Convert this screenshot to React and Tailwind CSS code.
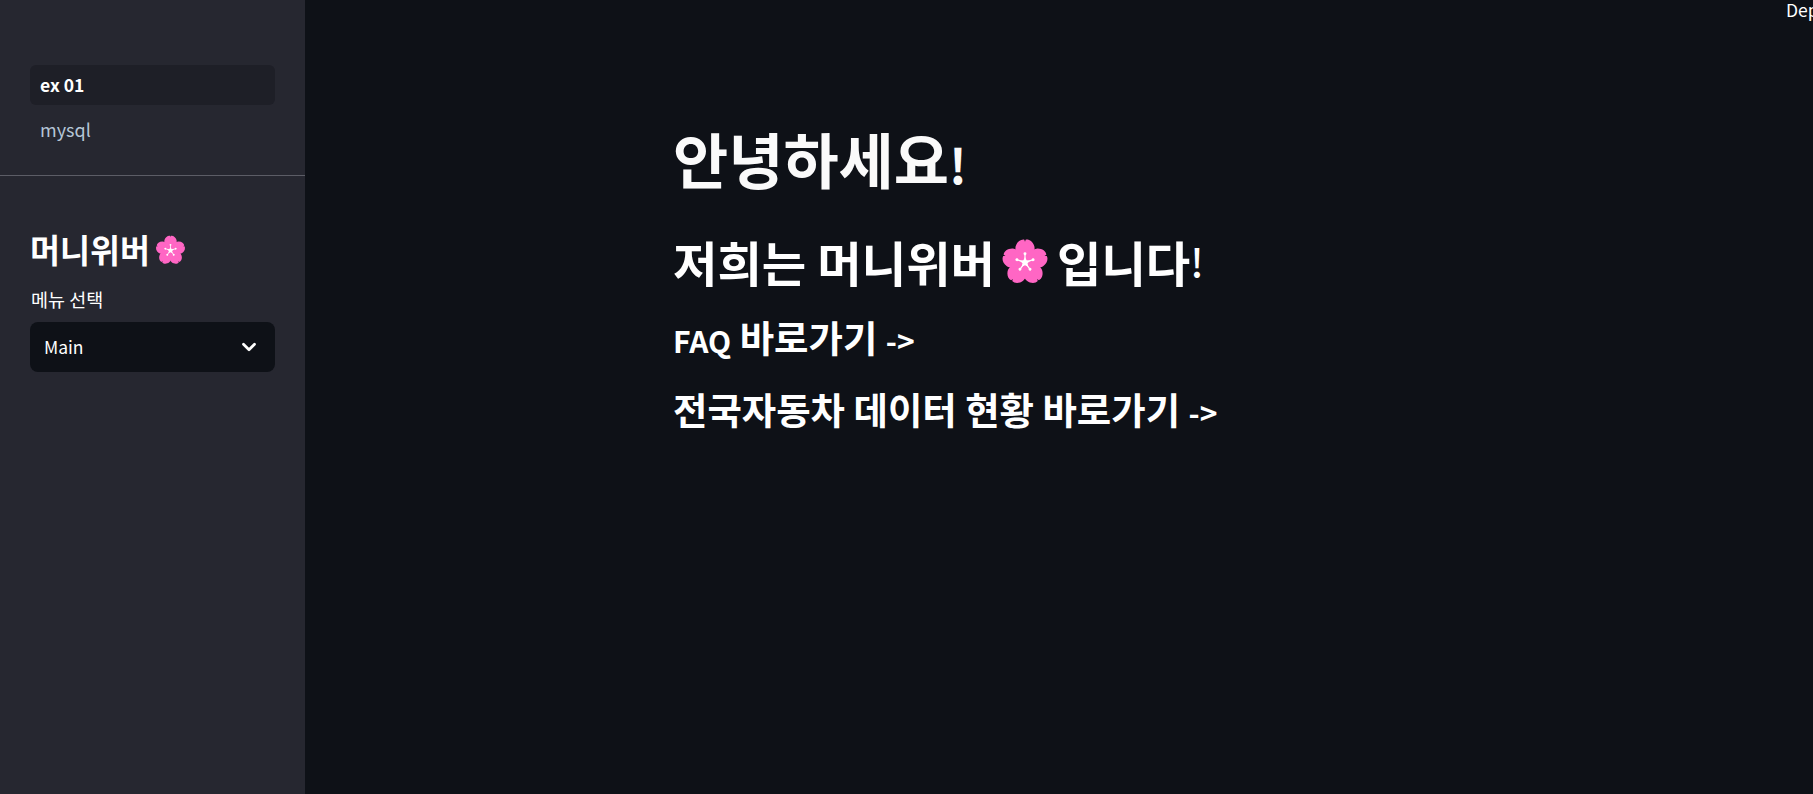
import React from "react";
import { ChevronDown } from "lucide-react";

const fontStack = "font-['Noto_Sans_CJK_KR','Noto_Sans',sans-serif]";

// 벚꽃 이모지 (no emoji font to rely on)
function Blossom({ className }) {
  const petals = [0, 72, 144, 216, 288];
  return (
    <svg viewBox="0 0 36 36" className={className}>
      {petals.map((deg) => (
        <path
          key={deg}
          transform={`rotate(${deg} 18 19)`}
          d="M18 20 C13 16 10 11 11 7 C12 3.5 15 1.5 17.5 2 L18 3.6 L18.5 2 C21 1.5 24 3.5 25 7 C26 11 23 16 18 20 Z"
          fill="#ff66c4"
        />
      ))}
      {petals.map((deg) => (
        <g key={deg} transform={`rotate(${deg} 18 19)`}>
          <path d="M18 19 L18 13" stroke="#ffffff" strokeWidth="0.9" />
          <circle cx="18" cy="12.6" r="1.1" fill="#ffffff" />
        </g>
      ))}
      <path
        d="M18 15 L19.2 17.4 L21.9 17.8 L19.9 19.7 L20.4 22.4 L18 21.1 L15.6 22.4 L16.1 19.7 L14.1 17.8 L16.8 17.4 Z"
        fill="#ffffff"
      />
    </svg>
  );
}

function Sidebar() {
  return (
    <aside className="w-[305px] shrink-0 bg-[#262730] flex flex-col">
      <nav className="pt-[65px] px-[30px] pb-[26px] border-b border-[#5c5d66]">
        <div className="h-[40px] rounded-md bg-[#1e1f27] px-[10px] flex items-center text-[17.5px] font-semibold text-white">
          ex 01
        </div>
        <div className="h-[40px] mt-[4px] px-[10px] flex items-center text-[18px] text-[#b5c5d6]">
          mysql
        </div>
      </nav>

      <div className="px-[30px] pt-[53px]">
        <h2 className="flex items-center h-[40px] text-[32.6px] leading-[40px] font-bold text-white">
          머니위버
          <Blossom className="w-[31px] h-[31px] ml-[5px]" />
        </h2>
        <label className="block mt-[17px] pl-[1px] text-[18.5px] leading-[26px] text-white">메뉴 선택</label>
        <div className="mt-[10px] h-[50px] rounded-lg bg-[#0e1117] pl-[14px] pr-[15px] flex items-center justify-between text-[17.5px] text-white">
          Main
          <ChevronDown className="w-[22px] h-[22px]" strokeWidth={3} />
        </div>
      </div>
    </aside>
  );
}

export default function App() {
  return (
    <div className={`relative flex h-[794px] w-full overflow-hidden bg-[#0e1117] ${fontStack}`}>
      <Sidebar />
      <main className="flex-1 pl-[368px] pt-[115px] text-white">
        <h1 className="h-[86px] text-[60px] leading-[86px] font-bold text-[#fafafa]">
          안녕하세요<span className="text-[48px]">!</span>
        </h1>
        <h2 className="mt-[28px] h-[64px] flex items-center text-[48.3px] leading-[64px] font-bold">
          저희는 머니위버
          <Blossom className="w-[48px] h-[48px] ml-[6px] mr-[8px]" />
          입니다<span className="text-[39px] font-medium">!</span>
        </h2>
        <h3 className="mt-[19px] h-[50px] text-[37.4px] leading-[50px] font-bold">
          <span className="text-[30px]">FAQ</span> 바로가기 <span className="text-[30px]">-&gt;</span>
        </h3>
        <h3 className="mt-[22px] h-[50px] text-[37.4px] leading-[50px] font-bold">
          전국자동차 데이터 현황 바로가기 <span className="text-[30px]">-&gt;</span>
        </h3>
      </main>
      <span className="absolute top-0 left-[1786px] text-[17.5px] leading-[20px] text-white whitespace-nowrap">Deploy</span>
    </div>
  );
}
